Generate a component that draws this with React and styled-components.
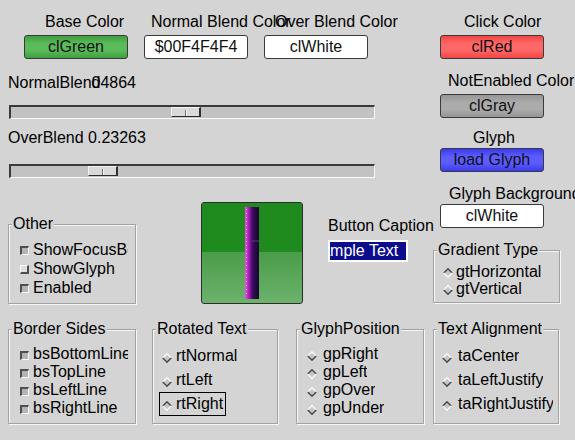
import styled, { createGlobalStyle } from 'styled-components';

const GlobalStyle = createGlobalStyle`
  body {
    margin: 0;
    background: #d4d4d4;
    font-family: "Liberation Sans", Arial, sans-serif;
    font-size: 16px;
    color: #000;
  }
`;

const Form = styled.div`
  width: 575px;
  height: 440px;
  overflow: hidden;
  display: flex;
  flex-direction: column;
  background: #d4d4d4;
`;
const UpperArea = styled.div`
  display: flex;
`;
const LeftPane = styled.div`
  width: 433px;
  flex-shrink: 0;
  display: flex;
  flex-direction: column;
`;
const RightPane = styled.div`
  flex: 1;
  display: flex;
  flex-direction: column;
`;
const ColorRow = styled.div`
  display: flex;
  gap: 16px;
  padding: 13px 0 0 24px;
`;

// colour picker: caption above a coloured button
const Picker = styled.div`
  display: flex;
  flex-direction: column;
  width: 104px;
  margin-top: ${(p) => p.$top || 0}px;
  margin-left: ${(p) => p.$left || 0}px;
`;
const PickerLabel = styled.div`
  height: 18px;
  line-height: 18px;
  white-space: nowrap;
  margin-left: ${(p) => p.$offset}px;
  margin-bottom: ${(p) => p.$gap}px;
`;
const palette = {
  green: ['#3f9f3f', '#5bbb5b'],
  white: ['#ffffff', '#ffffff'],
  red: ['#f24444', '#ff6868'],
  gray: ['#969696', '#ababab'],
  blue: ['#3a3aee', '#5c5cff'],
};
const ColorButton = styled.div`
  height: 24px;
  box-sizing: border-box;
  border: 1px solid #3a3a3a;
  border-radius: 3px;
  background: ${(p) => {
    const [edge, mid] = palette[p.$color];
    return `linear-gradient(to bottom, ${edge} 0%, ${mid} 35%, ${mid} 65%, ${edge} 100%)`;
  }};
  line-height: 22px;
  text-align: center;
  white-space: nowrap;
  color: #111;
`;

// trackbars
const SliderCaption = styled.div`
  display: flex;
  height: 18px;
  line-height: 18px;
  white-space: nowrap;
  padding-left: 8px;
  margin-top: ${(p) => p.$top}px;
`;
const CaptionValue = styled.span`
  margin-left: -9px;
`;
const Track = styled.div`
  position: relative;
  margin: ${(p) => p.$top}px 0 0 9px;
  width: 366px;
  height: 14px;
  box-sizing: border-box;
  border-top: 2px solid #3a3a3a;
  border-left: 2px solid #3a3a3a;
  border-bottom: 1px solid #fafafa;
  border-right: 1px solid #fafafa;
  background: #c2c2c2;
`;
const Thumb = styled.div`
  position: absolute;
  top: 0;
  left: ${(p) => p.$pos}px;
  width: 30px;
  height: 10px;
  box-sizing: border-box;
  background: #d9d9d9;
  border-top: 1px solid #f4f4f4;
  border-left: 1px solid #f4f4f4;
  border-right: 2px solid #2e2e2e;
  border-bottom: 1px solid #2e2e2e;
  &::after {
    content: '';
    position: absolute;
    left: 13px;
    top: 2px;
    width: 1px;
    height: 6px;
    background: #707070;
    box-shadow: 1px 0 0 #fff;
  }
`;

const MiddleRow = styled.div`
  display: flex;
  align-items: flex-start;
`;
const BigButton = styled.div`
  width: 102px;
  height: 102px;
  box-sizing: border-box;
  margin: 24px 0 0 65px;
  border: 1px solid #2c2c2c;
  border-radius: 3px;
  background: linear-gradient(
    to bottom,
    #1f8b1f 0%,
    #1f8b1f 49%,
    #4a9c4a 49%,
    #6cb26c 100%
  );
  display: flex;
  align-items: center;
  justify-content: center;
`;
const CaptionBox = styled.div`
  display: flex;
  flex-direction: column;
  width: 80px;
  margin: 39px 0 0 25px;
`;
const CaptionLabel = styled.div`
  height: 18px;
  line-height: 18px;
  white-space: nowrap;
`;
const Edit = styled.div`
  margin-top: 5px;
  height: 22px;
  box-sizing: border-box;
  background: #fff;
  padding: 2px;
  overflow: hidden;
`;
const Selection = styled.div`
  height: 18px;
  line-height: 18px;
  background: #0c0c8c;
  color: #fff;
  white-space: nowrap;
  overflow: hidden;
  text-indent: -19.5px;
`;

// group boxes
const Group = styled.fieldset`
  margin: ${(p) => p.$top || 0}px 0 0 ${(p) => p.$left || 0}px;
  padding: 0;
  min-width: 0;
  width: ${(p) => p.$width}px;
  box-sizing: border-box;
  border: 1px solid #a2a2a2;
  box-shadow: inset 1px 1px 0 #f6f6f6, 1px 1px 0 #f6f6f6;
`;
const Legend = styled.legend`
  margin-left: 3px;
  padding: 0 1px;
  line-height: 18px;
  background: #d4d4d4;
  white-space: nowrap;
`;
const ItemList = styled.div`
  display: flex;
  flex-direction: column;
  align-items: flex-start;
  padding: ${(p) => p.$pad};
  overflow: hidden;
`;
const Item = styled.div`
  display: flex;
  align-items: center;
  gap: ${(p) => p.$gap}px;
  height: ${(p) => p.$pitch}px;
  line-height: 18px;
  white-space: nowrap;
  box-sizing: border-box;
  max-width: 100%;
  overflow: hidden;
  ${(p) =>
    p.$framed &&
    `
    padding: 0 2px;
    border: 1px solid ${p.$focused ? '#000' : 'transparent'};
  `}
`;
const CheckMark = styled.span`
  flex-shrink: 0;
  width: 9px;
  height: 9px;
  margin-top: 2px;
  box-sizing: border-box;
  background: ${(p) => (p.$checked ? '#b4b4b4' : '#dedede')};
  border-style: solid;
  border-width: ${(p) => (p.$checked ? '2px 1px 1px 2px' : '1px 2px 2px 1px')};
  border-color: ${(p) =>
    p.$checked
      ? '#4e4e4e #fafafa #fafafa #4e4e4e'
      : '#fafafa #4e4e4e #4e4e4e #fafafa'};
`;
const BottomRow = styled.div`
  display: flex;
  margin-top: 16px;
`;

function Diamond({ checked }) {
  const upper = checked ? '#444' : '#fafafa';
  const lower = checked ? '#fafafa' : '#444';
  return (
    <svg width="10" height="10" viewBox="0 0 10 10" style={{ flexShrink: 0, marginTop: 3 }}>
      <polygon points="5,0.8 9.2,5 5,9.2 0.8,5" fill="#c6c6c6" />
      <path d="M0.8 5 L5 0.8 L9.2 5" fill="none" stroke={upper} strokeWidth="1.4" />
      <path d="M0.8 5 L5 9.2 L9.2 5" fill="none" stroke={lower} strokeWidth="1.4" />
    </svg>
  );
}

function GlyphBar() {
  return (
    <svg width="14" height="92" viewBox="0 0 14 92">
      <defs>
        <linearGradient id="glyphFill" x1="0" y1="0" x2="1" y2="0">
          <stop offset="0" stopColor="#f050e8" />
          <stop offset="0.3" stopColor="#a01ab0" />
          <stop offset="0.55" stopColor="#3a0c60" />
          <stop offset="1" stopColor="#140828" />
        </linearGradient>
      </defs>
      <rect x="0" y="0" width="14" height="92" fill="url(#glyphFill)" />
      <line x1="1.5" y1="2" x2="1.5" y2="90" stroke="#ffe0ff" strokeWidth="1" strokeDasharray="1 3" />
      <line x1="7" y1="34" x2="14" y2="34" stroke="#5a3a7a" strokeWidth="1" />
    </svg>
  );
}

function ColorPicker({ label, offset, gap = 4, color, text, top, left }) {
  return (
    <Picker $top={top} $left={left}>
      <PickerLabel $offset={offset} $gap={gap}>
        {label}
      </PickerLabel>
      <ColorButton $color={color}>{text}</ColorButton>
    </Picker>
  );
}

function OptionGroup({ title, width, top, left, pad, pitch, gap, kind, items, framed }) {
  return (
    <Group $width={width} $top={top} $left={left}>
      <Legend>{title}</Legend>
      <ItemList $pad={pad}>
        {items.map((it) => (
          <Item key={it.label} $pitch={pitch} $gap={gap} $framed={framed} $focused={it.focused}>
            {kind === 'check' ? <CheckMark $checked={it.on} /> : <Diamond checked={it.on} />}
            <span>{it.label}</span>
          </Item>
        ))}
      </ItemList>
    </Group>
  );
}

export default function App() {
  return (
    <>
      <GlobalStyle />
      <Form>
        <UpperArea>
          <LeftPane>
            <ColorRow>
              <ColorPicker label="Base Color" offset={21} color="green" text="clGreen" />
              <ColorPicker label="Normal Blend Color" offset={7} color="white" text="$00F4F4F4" />
              <ColorPicker label="Over Blend Color" offset={11} color="white" text="clWhite" />
            </ColorRow>

            <SliderCaption $top={15}>
              <span>NormalBlend</span>
              <CaptionValue>04864</CaptionValue>
            </SliderCaption>
            <Track $top={13}>
              <Thumb $pos={160} />
            </Track>
            <SliderCaption $top={10}>OverBlend 0.23263</SliderCaption>
            <Track $top={17}>
              <Thumb $pos={77} />
            </Track>

            <MiddleRow>
              <OptionGroup
                title="Other"
                width={128}
                top={37}
                left={8}
                pad="7px 7px 6px 11px"
                pitch={19}
                gap={4}
                kind="check"
                items={[
                  { label: 'ShowFocusBorder', on: true },
                  { label: 'ShowGlyph', on: false },
                  { label: 'Enabled', on: true },
                ]}
              />
              <BigButton>
                <GlyphBar />
              </BigButton>
              <CaptionBox>
                <CaptionLabel>Button Caption</CaptionLabel>
                <Edit>
                  <Selection>Sample Text</Selection>
                </Edit>
              </CaptionBox>
            </MiddleRow>
          </LeftPane>

          <RightPane>
            <ColorPicker label="Click Color" offset={24} color="red" text="clRed" top={13} left={7} />
            <ColorPicker label="NotEnabled Color" offset={8} color="gray" text="clGray" top={13} left={7} />
            <ColorPicker label="Glyph" offset={33} gap={1} color="blue" text="load Glyph" top={11} left={7} />
            <ColorPicker label="Glyph Background" offset={9} gap={1} color="white" text="clWhite" top={13} left={7} />
            <OptionGroup
              title="Gradient Type"
              width={127}
              top={13}
              pad="4px 7px 5px 9px"
              pitch={17}
              gap={3}
              kind="radio"
              items={[
                { label: 'gtHorizontal', on: true },
                { label: 'gtVertical', on: false },
              ]}
            />
          </RightPane>
        </UpperArea>

        <BottomRow>
          <OptionGroup
            title="Border Sides"
            width={128}
            left={8}
            pad="7px 7px 6px 11px"
            pitch={18}
            gap={4}
            kind="check"
            items={[
              { label: 'bsBottomLine', on: true },
              { label: 'bsTopLine', on: true },
              { label: 'bsLeftLine', on: true },
              { label: 'bsRightLine', on: true },
            ]}
          />
          <OptionGroup
            title="Rotated Text"
            width={126}
            left={16}
            pad="6px 6px 6px 6px"
            pitch={24}
            gap={4}
            kind="radio"
            framed
            items={[
              { label: 'rtNormal', on: false },
              { label: 'rtLeft', on: false },
              { label: 'rtRight', on: true, focused: true },
            ]}
          />
          <OptionGroup
            title="GlyphPosition"
            width={128}
            left={18}
            pad="7px 7px 6px 10px"
            pitch={18}
            gap={6}
            kind="radio"
            items={[
              { label: 'gpRight', on: false },
              { label: 'gpLeft', on: true },
              { label: 'gpOver', on: false },
              { label: 'gpUnder', on: false },
            ]}
          />
          <OptionGroup
            title="Text Alignment"
            width={126}
            left={9}
            pad="6px 5px 6px 8px"
            pitch={24}
            gap={6}
            kind="radio"
            items={[
              { label: 'taCenter', on: false },
              { label: 'taLeftJustify', on: false },
              { label: 'taRightJustify', on: true },
            ]}
          />
        </BottomRow>
      </Form>
    </>
  );
}
